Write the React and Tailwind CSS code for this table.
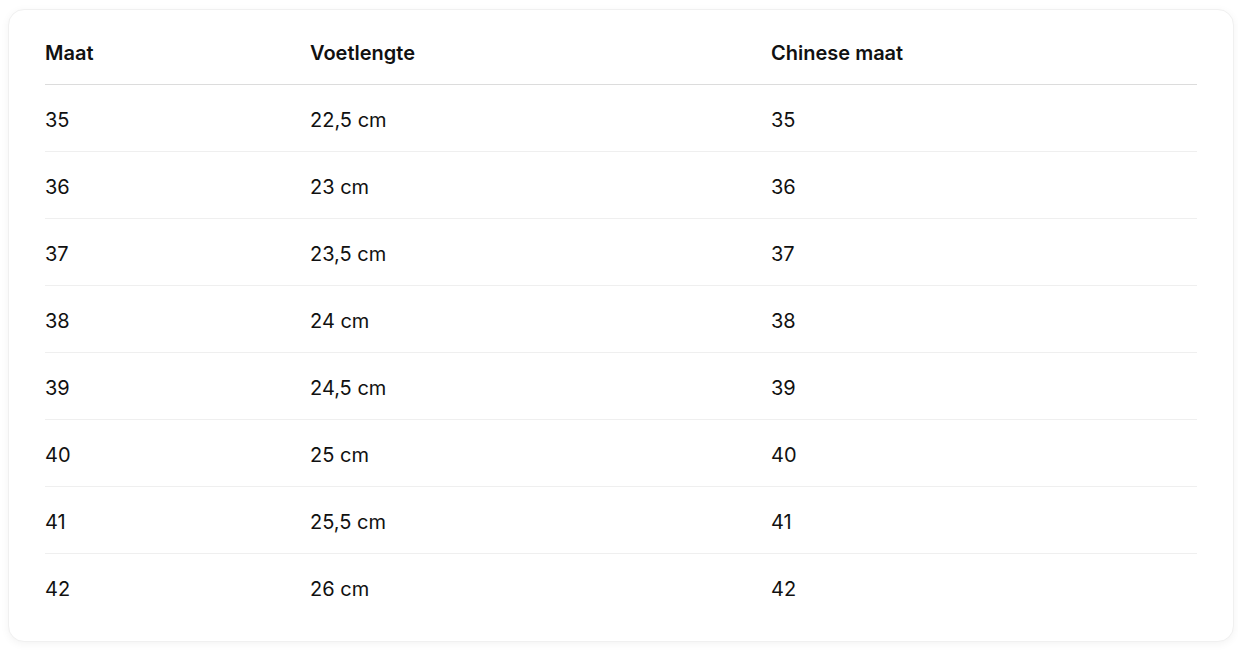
const rows = [
  ['35', '22,5 cm', '35'],
  ['36', '23 cm', '36'],
  ['37', '23,5 cm', '37'],
  ['38', '24 cm', '38'],
  ['39', '24,5 cm', '39'],
  ['40', '25 cm', '40'],
  ['41', '25,5 cm', '41'],
  ['42', '26 cm', '42'],
];

export default function App() {
  return (
    <div className="min-h-screen bg-white pt-[9px] pr-1 pb-2 pl-2 font-['Inter',sans-serif] text-[#111]">
      <div className="rounded-2xl border border-[#f0f0f0] bg-white px-9 pt-[7px] pb-[21px] shadow-[0_2px_8px_rgba(0,0,0,0.05)]">
        <table className="w-full table-fixed border-collapse text-left">
          <colgroup>
            <col className="w-[265px]" />
            <col className="w-[461px]" />
            <col />
          </colgroup>
          <thead>
            <tr className="h-[67px] border-b border-[#dcdcdc]">
              <th className="pt-[5px] align-middle text-[20px] font-semibold">Maat</th>
              <th className="pt-[5px] align-middle text-[20px] font-semibold">Voetlengte</th>
              <th className="pt-[5px] align-middle text-[20px] font-semibold">Chinese maat</th>
            </tr>
          </thead>
          <tbody>
            {rows.map((r, i) => (
              <tr
                key={r[0]}
                className={`h-[67px] ${i < rows.length - 1 ? 'border-b border-[#efefef]' : ''}`}
              >
                {r.map((c, j) => (
                  <td key={j} className="pt-[5px] align-middle text-[20px]">
                    {c}
                  </td>
                ))}
              </tr>
            ))}
          </tbody>
        </table>
      </div>
    </div>
  );
}
